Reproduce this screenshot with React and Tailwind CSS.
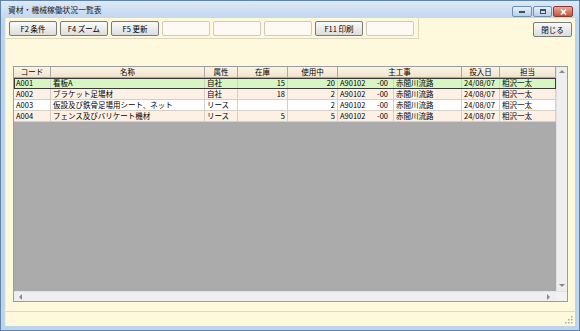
const rows = [
  { code: 'A001', name: '看板A', attr: '自社', stock: '15', used: '20', bg: 'bg-[#d7f6c4]', sel: true },
  { code: 'A002', name: 'ブラケット足場材', attr: '自社', stock: '18', used: '2', bg: 'bg-[#fdf0e5]' },
  { code: 'A003', name: '仮設及び鉄骨足場用シート、ネット', attr: 'リース', stock: '', used: '2', bg: 'bg-white' },
  { code: 'A004', name: 'フェンス及びバリケート機材', attr: 'リース', stock: '5', used: '5', bg: 'bg-[#fdf0e5]' },
];

const buttons = ['F2 条件', 'F4 ズーム', 'F5 更新', '', '', '', 'F11 印刷', ''];

const cols = 'grid grid-cols-[37px_154px_33px_50px_50px_56px_68px_38px_56px]';

const Arrow = ({ dir }) => {
  const pts = {
    up: '0,4 3,1 6,4',
    down: '0,1 3,4 6,1',
    left: '4,0 1,3 4,6',
    right: '1,0 4,3 1,6',
  }[dir];
  return (
    <svg width="6" height="6" viewBox="0 0 6 6">
      <polygon points={pts} fill="#8a8a8a" />
    </svg>
  );
};

const Cell = ({ children, right, className = '' }) => (
  <div
    className={`h-[11px] border-r border-b border-[#d6cfc6] px-[2px] flex items-center overflow-hidden whitespace-nowrap ${
      right ? 'justify-end' : ''
    } ${className}`}
  >
    {children}
  </div>
);

const Head = ({ children, className = '' }) => (
  <div
    className={`h-[11px] bg-gradient-to-b from-[#fbf4e6] to-[#f1e4cc] border-r border-b border-[#a8a8a8] flex items-center justify-center ${className}`}
  >
    {children}
  </div>
);

export default function App() {
  return (
    <div className="w-[580px] h-[331px] bg-[#bed4ec] border border-[#5f84a8] flex flex-col font-['Noto_Sans_CJK_JP','Liberation_Sans',sans-serif] text-[7.5px] leading-none text-black overflow-hidden">
      {/* title bar */}
      <div className="h-[17px] flex items-center bg-gradient-to-b from-[#dce9f7] to-[#c3d7ee] pl-[7px] pr-[6px]">
        <span className="text-[7.8px] text-[#1a1a1a]">資材・機械稼働状況一覧表</span>
        <div className="ml-auto flex gap-[1px] self-start mt-[5px]">
          <div className="w-[20px] h-[11px] rounded-[2px] border border-[#6f8fb2] bg-gradient-to-b from-[#e6eff9] to-[#b9cfe8] flex items-center justify-center">
            <div className="w-[6px] h-[2px] bg-[#3b4f66]" />
          </div>
          <div className="w-[19px] h-[11px] rounded-[2px] border border-[#6f8fb2] bg-gradient-to-b from-[#e6eff9] to-[#b9cfe8] flex items-center justify-center">
            <div className="w-[6px] h-[5px] border border-[#3b4f66] border-t-2" />
          </div>
          <div className="w-[20px] h-[11px] rounded-[2px] border border-[#8a3a32] bg-gradient-to-b from-[#e9a99c] to-[#c8503e] flex items-center justify-center">
            <svg width="7" height="6" viewBox="0 0 7 6">
              <path d="M1 0.5 L6 5.5 M6 0.5 L1 5.5" stroke="#fff" strokeWidth="1.6" />
            </svg>
          </div>
        </div>
      </div>

      {/* client */}
      <div className="flex-1 mx-[4px] mb-[4px] bg-[#fef8dc] flex flex-col border-l border-[#e9eef5]">
        {/* toolbar */}
        <div className="flex items-start h-[21px]">
          <div className="w-[413px] h-[21px] border-r border-b border-[#dcd6bf] pl-[3px] pt-[3px] flex gap-[3px]">
            {buttons.map((b, i) =>
              b ? (
                <div
                  key={i}
                  className="w-[48px] h-[15px] rounded-[2px] border border-[#7a7a7a] bg-gradient-to-b from-[#fafafa] to-[#dddddd] flex items-center justify-center"
                >
                  {b}
                </div>
              ) : (
                <div key={i} className="w-[48px] h-[15px] rounded-[2px] border border-[#cdcabd] bg-[#fcfaf2]" />
              )
            )}
          </div>
          <div className="ml-auto mr-[3px] mt-[4px] w-[39px] h-[15px] rounded-[2px] border border-[#7a7a7a] bg-gradient-to-b from-[#fafafa] to-[#dddddd] flex items-center justify-center">
            閉じる
          </div>
        </div>

        {/* grid */}
        <div className="mt-[27px] ml-[7px] mr-[7px] h-[236px] border border-[#9c9c9c] flex flex-col bg-[#ababab]">
          <div className="flex flex-1 min-h-0">
            <div className="flex-1 flex flex-col">
              <div className={cols}>
                <Head>コード</Head>
                <Head>名称</Head>
                <Head>属性</Head>
                <Head>在庫</Head>
                <Head>使用中</Head>
                <Head className="col-span-2">主工事</Head>
                <Head>投入日</Head>
                <Head>担当</Head>
              </div>
              {rows.map((r) => (
                <div
                  key={r.code}
                  className={`${cols} ${r.bg} ${r.sel ? 'outline outline-1 -outline-offset-1 outline-[#3a3a3a]' : ''}`}
                >
                  <Cell>{r.code}</Cell>
                  <Cell>{r.name}</Cell>
                  <Cell>{r.attr}</Cell>
                  <Cell right>{r.stock}</Cell>
                  <Cell right>{r.used}</Cell>
                  <Cell className="justify-between pr-[5px]">
                    <span>A90102</span>
                    <span>-00</span>
                  </Cell>
                  <Cell>赤間川流路</Cell>
                  <Cell>24/08/07</Cell>
                  <Cell>相沢一太</Cell>
                </div>
              ))}
            </div>
            <div className="w-[11px] bg-[#eeeeee] border-l border-[#e2e2e2] flex flex-col items-center justify-between py-[2px]">
              <Arrow dir="up" />
              <Arrow dir="down" />
            </div>
          </div>
          <div className="h-[10px] flex bg-[#eeeeee] border-t border-[#e2e2e2]">
            <div className="flex-1 flex items-center justify-between px-[4px]">
              <Arrow dir="left" />
              <Arrow dir="right" />
            </div>
            <div className="w-[11px] bg-[#f2f2f2]" />
          </div>
        </div>

        {/* status bar */}
        <div className="mt-auto h-[15px] border-t border-[#dcd8c6] flex items-end justify-end pr-[2px] pb-[2px]">
          <svg width="8" height="8" viewBox="0 0 8 8">
            <g fill="#a8a8a8">
              <rect x="6" y="0" width="1.5" height="1.5" />
              <rect x="3" y="3" width="1.5" height="1.5" />
              <rect x="6" y="3" width="1.5" height="1.5" />
              <rect x="0" y="6" width="1.5" height="1.5" />
              <rect x="3" y="6" width="1.5" height="1.5" />
              <rect x="6" y="6" width="1.5" height="1.5" />
            </g>
          </svg>
        </div>
      </div>
    </div>
  );
}
